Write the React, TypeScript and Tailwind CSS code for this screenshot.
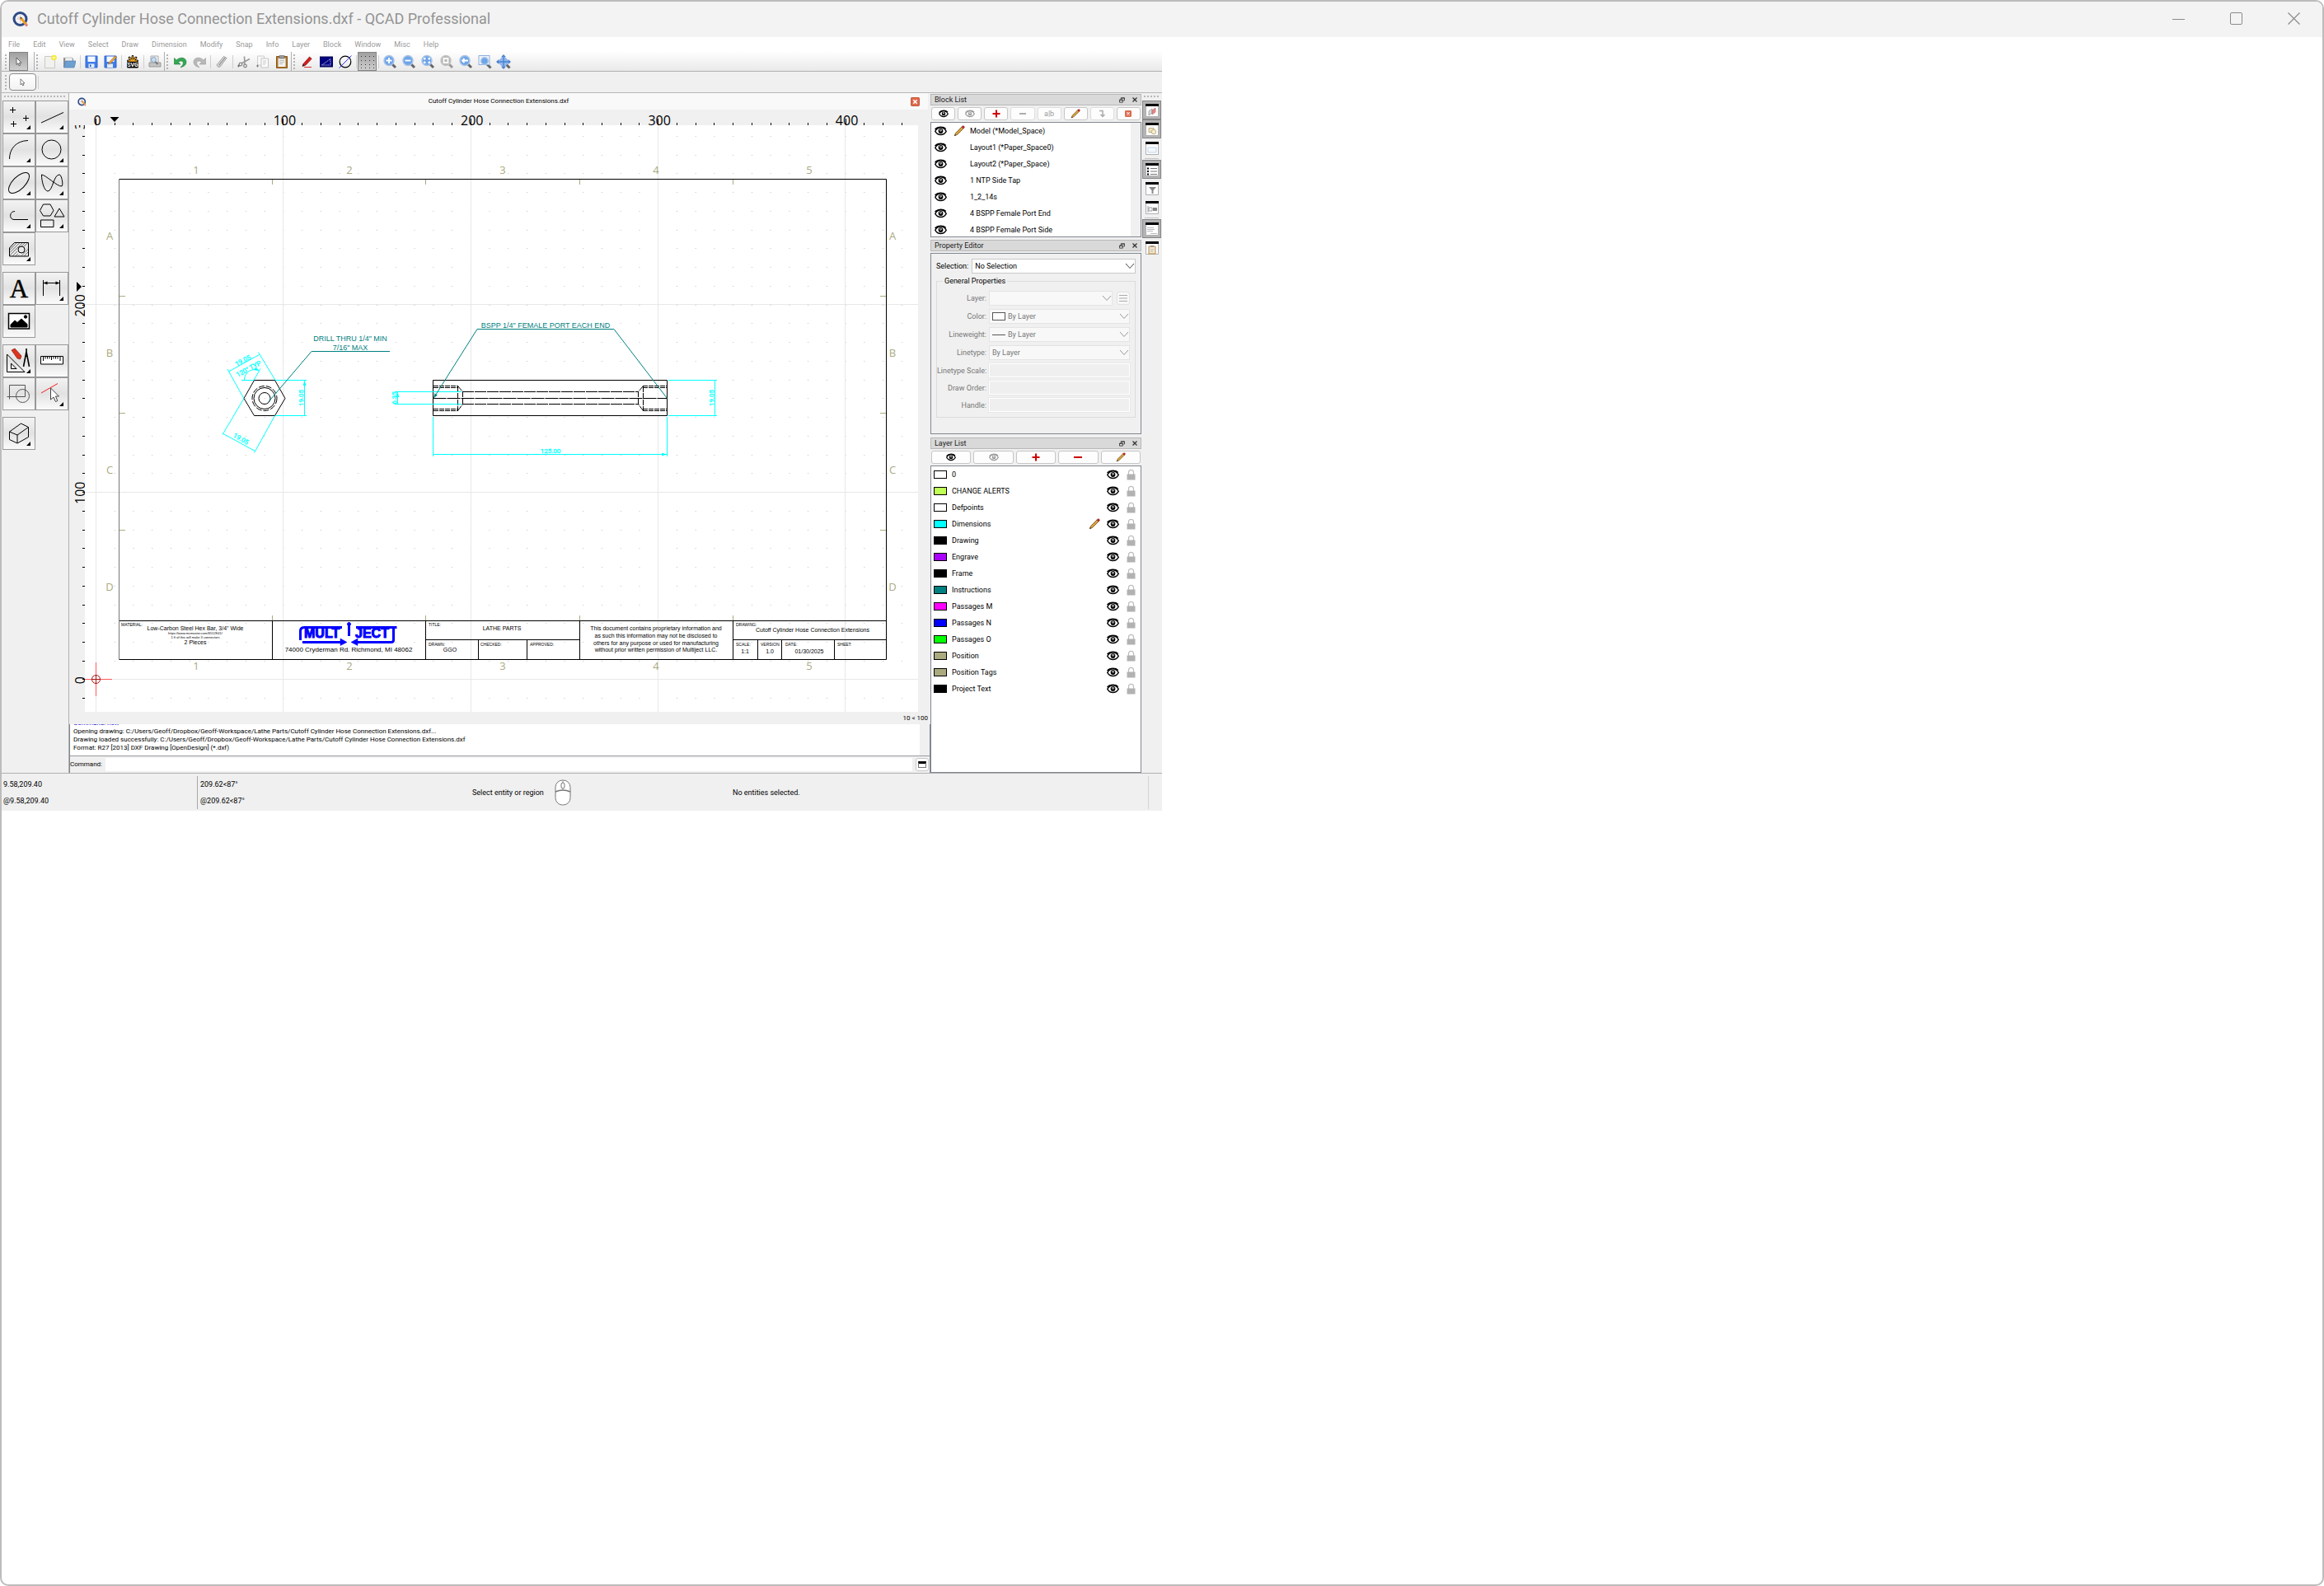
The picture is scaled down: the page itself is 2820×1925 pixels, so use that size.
import React from 'react';
import clsx from 'clsx';

type IconProps = { className?: string };

const menus = ['File', 'Edit', 'View', 'Select', 'Draw', 'Dimension', 'Modify', 'Snap', 'Info', 'Layer', 'Block', 'Window', 'Misc', 'Help'];

const blocks = [
  'Model (*Model_Space)',
  'Layout1 (*Paper_Space0)',
  'Layout2 (*Paper_Space)',
  '1 NTP Side Tap',
  '1_2_14s',
  '4 BSPP Female Port End',
  '4 BSPP Female Port Side',
];

const layers = [
  { name: '0', color: 'bg-white' },
  { name: 'CHANGE ALERTS', color: 'bg-[#bfff55]' },
  { name: 'Defpoints', color: 'bg-white' },
  { name: 'Dimensions', color: 'bg-[#00ffff]', active: true },
  { name: 'Drawing', color: 'bg-black' },
  { name: 'Engrave', color: 'bg-[#aa00ff]' },
  { name: 'Frame', color: 'bg-black' },
  { name: 'Instructions', color: 'bg-[#008080]' },
  { name: 'Passages M', color: 'bg-[#ff00ff]' },
  { name: 'Passages N', color: 'bg-[#0000ff]' },
  { name: 'Passages O', color: 'bg-[#00ff00]' },
  { name: 'Position', color: 'bg-[#aaaa7f]' },
  { name: 'Position Tags', color: 'bg-[#aaaa7f]' },
  { name: 'Project Text', color: 'bg-black' },
];

/* ---------- icons ---------- */

const AppLogo: React.FC<IconProps> = ({ className }) => (
  <svg viewBox="0 0 20 20" className={className}>
    <circle cx="9.5" cy="10" r="7.5" fill="#f4f4f8" stroke="#2f4a86" strokeWidth="3" />
    <path d="M5 10h9M9.500 5.500v9M6 7l7 6" stroke="#c9b3b3" strokeWidth=".7" />
    <path d="M10 8.500l6.500 8" stroke="#f0a020" strokeWidth="3" />
    <path d="M9.200 7.500l1 2.600 1.600-1.400z" fill="#333" />
    <path d="M16 16l2 2.500" stroke="#e08080" strokeWidth="3" />
  </svg>
);

const Eye: React.FC<IconProps> = ({ className }) => (
  <svg viewBox="0 0 15 12" className={className} fill="none" stroke="currentColor">
    <path d="M.8 6.300C2.500 3.300 4.800 1.800 7.500 1.800s5 1.500 6.700 4.500C12.500 9.200 10.200 10.500 7.500 10.500S2.500 9.200.8 6.300z" fill="white" strokeWidth="1.400" />
    <path d="M.6 4.300C2.600 1.900 4.800 1.300 7.500 1.300s4.600.6 6.200 2.200" strokeWidth="1.600" />
    <circle cx="7.500" cy="6" r="2.900" fill="currentColor" stroke="none" />
    <path d="M6.800 3.800v2q.8 1 1.500 0V4.200" stroke="white" strokeWidth=".9" />
  </svg>
);

const Pencil: React.FC<IconProps> = ({ className }) => (
  <svg viewBox="0 0 16 16" className={className}>
    <path d="M1.500 14.500L3 10.800 11.500 2.200l2.300 2.300L5.200 13z" fill="#d9a441" stroke="#6d4a17" strokeWidth=".9" />
    <path d="M11.500 2.200l1-1q1.200-.8 2.200.2t.2 2.100l-1.100 1z" fill="#d42a2a" stroke="#7a1515" strokeWidth=".6" />
    <path d="M1.300 14.700l.8-2.100 1.300 1.300z" fill="#222" />
  </svg>
);

const Lock: React.FC<IconProps> = ({ className }) => (
  <svg viewBox="0 0 11 14" className={className}>
    <path d="M2.500 7V4.300a3 3 0 016 0V7" fill="none" stroke="#bdbdbd" strokeWidth="1.200" />
    <rect x=".5" y="6.500" width="10" height="7" fill="#b2b2b2" />
  </svg>
);

const Plus: React.FC<IconProps> = ({ className }) => (
  <svg viewBox="0 0 10 10" className={className}>
    <path d="M5 .5v9M.5 5h9" stroke="#cc0000" strokeWidth="2" />
  </svg>
);

const Minus: React.FC<IconProps> = ({ className }) => (
  <svg viewBox="0 0 10 10" className={className}>
    <path d="M0 5h10" stroke="currentColor" strokeWidth="2" />
  </svg>
);

const CloseBox: React.FC<IconProps> = ({ className }) => (
  <svg viewBox="0 0 10 10" className={className}>
    <rect x=".5" y=".5" width="9" height="9" rx="1" fill="#e0694c" stroke="#c8573c" />
    <path d="M3 3l4 4M7 3L3 7" stroke="white" strokeWidth="1.400" />
  </svg>
);

const Chevron: React.FC<IconProps> = ({ className }) => (
  <svg viewBox="0 0 12 8" className={className}>
    <path d="M1 1l5 5.500L11 1" fill="none" stroke="currentColor" />
  </svg>
);

const Pointer: React.FC<IconProps> = ({ className }) => (
  <svg viewBox="0 0 8 12" className={className}>
    <path d="M1 1v8.500l2-1.800 1.200 3 1.400-.6-1.200-2.900H7z" fill="white" stroke="#444" strokeWidth=".8" />
  </svg>
);

const Lens: React.FC<{ glyph: string; gray?: boolean }> = ({ glyph, gray }) => (
  <svg viewBox="0 0 18 18" className="size-[18px]">
    <path d="M11 11l5 5" stroke={gray ? '#999' : '#666'} strokeWidth="3" />
    <circle cx="8" cy="7.500" r="6" fill={gray ? '#b5b5b5' : '#6fa5e8'} stroke={gray ? '#c5c5c5' : '#a9c4e6'} strokeWidth="1.500" />
    <path d={glyph} stroke="white" strokeWidth="1.800" fill="none" />
  </svg>
);

const FloatIcon: React.FC = () => (
  <svg viewBox="0 0 8 8" className="size-[7px]" fill="none" stroke="#333">
    <path d="M2.500 3V1h5v3.500H6M2.500 1.300h5" strokeWidth="1" />
    <path d="M.5 3.500h4.500V7H.5zM.5 4h4.500" strokeWidth="1" />
  </svg>
);

/* ---------- main toolbar ---------- */

const Grip: React.FC = () => <span className="mr-[3px] ml-[2px] h-[18px] w-[2px] shrink-0 bg-[repeating-linear-gradient(#b4b4b4_0_2px,transparent_2px_4px)]" />;

const Sep: React.FC = () => <span className="mx-px h-4 w-[2px] shrink-0 border-r border-[#d0d0d0]" />;

const Divider: React.FC = () => <span className="h-6 w-px shrink-0 bg-[#b0b0b0]" />;

const ToolButton: React.FC<{ label: string; pressed?: boolean; children: React.ReactNode }> = ({ label, pressed, children }) => (
  <button
    aria-label={label}
    className={clsx(
      'flex h-[23px] w-[23px] shrink-0 items-center justify-center',
      pressed && 'border border-[#858585] bg-linear-to-b from-[#a0a0a0] to-[#cfcfcf]',
    )}
  >
    {children}
  </button>
);

const Svg16: React.FC<{ children: React.ReactNode }> = ({ children }) => (
  <svg viewBox="0 0 16 16" className="size-4" fill="none">{children}</svg>
);

const MainToolbar: React.FC = () => (
  <div className="flex h-[25px] items-center border-b border-[#b0b0b0] bg-linear-to-b from-white to-[#e9e9e9] pt-px pl-[2px]">
    <Grip />
    <ToolButton label="Reset" pressed><Pointer className="h-3 w-2" /></ToolButton>
    <span className="w-[7px]" />
    <Divider />
    <Grip />
    <ToolButton label="New">
      <Svg16>
        <path d="M1.500 1.500h12v14h-12z" fill="#f1f1ef" stroke="#c9c9c4" />
        <circle cx="12.500" cy="3" r="3.300" fill="#f5ea3a" />
        <circle cx="12.500" cy="3" r="1.300" fill="#fffdd0" />
      </Svg16>
    </ToolButton>
    <ToolButton label="Open">
      <Svg16>
        <path d="M1 3h5l1 1h6v10H1z" fill="#8f8f8a" />
        <path d="M3 3h9v5H3z" fill="#f0f0f0" stroke="#999" strokeWidth=".5" />
        <path d="M3.500 7H16l-2 8H1.500z" fill="#6d9fd1" stroke="#4b7fb5" strokeWidth=".7" />
      </Svg16>
    </ToolButton>
    <Sep />
    <ToolButton label="Save">
      <Svg16>
        <path d="M1 1h14v14H1z" fill="#3f7cea" stroke="#2f66cc" />
        <path d="M3.500 1.500h9v6.500h-9z" fill="#f5f8ff" />
        <path d="M4.500 10.500h7V15h-7z" fill="#e4ecfa" />
        <path d="M6 11.500h1.500V14H6z" fill="#1e52b8" />
      </Svg16>
    </ToolButton>
    <ToolButton label="Save as">
      <Svg16>
        <path d="M1 1h14v14H1z" fill="#3f7cea" stroke="#2f66cc" />
        <path d="M3.500 1.500h9v6.500h-9z" fill="#f5f8ff" />
        <path d="M4 10.500h7V15H4z" fill="#e4ecfa" />
        <path d="M5.500 11l1-2.500L13.500 1l1.800 1.600L8 10z" fill="#f0a53a" stroke="#9c6415" strokeWidth=".6" />
      </Svg16>
    </ToolButton>
    <Sep />
    <ToolButton label="SVG export">
      <svg viewBox="0 0 16 16" className="size-4">
        <path d="M8 1.500v6M4 3l4 5M12 3L8 8M2.500 7h11" stroke="black" strokeWidth="2.800" strokeLinecap="round" />
        <path d="M8 1.500v5M4.200 3.200L7.500 7M11.800 3.200L8.500 7M3 7h10" stroke="#f5a623" strokeWidth="1.300" strokeLinecap="round" />
        <rect x="1" y="8" width="14" height="7.500" rx="1.500" fill="black" />
        <text x="8" y="14" fontSize="7" fontWeight="700" fill="white" textAnchor="middle" fontFamily="Roboto, sans-serif">SVG</text>
      </svg>
    </ToolButton>
    <Sep />
    <ToolButton label="Print preview">
      <Svg16>
        <path d="M3 1h9v9H3z" fill="#f2f2f2" stroke="#aaa" />
        <path d="M1 9h14v5H1z" fill="#c4c4c4" stroke="#999" />
        <path d="M8.500 8l3 3" stroke="#777" strokeWidth="2" />
        <circle cx="6.500" cy="5.500" r="3" fill="#c8ddf2" stroke="#7f9cbb" />
      </Svg16>
    </ToolButton>
    <Divider />
    <Grip />
    <ToolButton label="Undo">
      <Svg16>
        <path d="M.5 3.500v7.500H8L5.500 8.700C7.500 6.300 11 6.500 11.300 9.300c.2 2-1 3.700-3.300 5.400 4-.7 7-3 7-6.500C15 2.800 7.500 1.300 3.200 6z" fill="#34a853" stroke="#1c7a38" strokeWidth=".6" />
      </Svg16>
    </ToolButton>
    <ToolButton label="Redo">
      <Svg16>
        <path d="M15.500 3.500v7.500H8l2.500-2.300C8.500 6.300 5 6.500 4.700 9.300c-.2 2 1 3.700 3.300 5.400-4-.7-7-3-7-6.500C1 2.800 8.500 1.300 12.800 6z" fill="#b8b8b8" stroke="#999" strokeWidth=".6" />
      </Svg16>
    </ToolButton>
    <Sep />
    <ToolButton label="Delete">
      <Svg16>
        <path d="M2 12L10.500 1.500l3.500 2L6 14q-2.500 1.500-4-2z" fill="#e4e4e4" stroke="#9a9a9a" />
        <path d="M4.500 12.500L12 3" stroke="#9a9a9a" strokeWidth="1.500" />
      </Svg16>
    </ToolButton>
    <Sep />
    <ToolButton label="Cut">
      <Svg16>
        <path d="M8.500 1.500L9 11M15 4.500L5 10" stroke="#999" strokeWidth="1.600" />
        <circle cx="4" cy="11" r="1.800" stroke="#888" strokeWidth="1.300" />
        <circle cx="9.500" cy="13" r="1.800" stroke="#888" strokeWidth="1.300" />
        <path d="M0 13h3M1.500 11.500v3" stroke="#555" strokeWidth=".8" />
      </Svg16>
    </ToolButton>
    <ToolButton label="Copy">
      <Svg16>
        <path d="M1.500 1h8v11h-8z" fill="#f7f7f7" stroke="#cfcfcf" />
        <path d="M6 4h8.500v11H6z" fill="#fafafa" stroke="#c4c4c4" />
        <path d="M8 7h4M8 9h4M8 11h3" stroke="#ccc" />
        <path d="M0 13h3M1.500 11.500v3" stroke="#666" strokeWidth=".8" />
      </Svg16>
    </ToolButton>
    <ToolButton label="Paste">
      <Svg16>
        <path d="M1.500 1.500h13v14h-13z" fill="#b0762c" stroke="#875719" />
        <path d="M3.500 3.500h9v10.500h-9z" fill="#f2f2f0" />
        <path d="M5 .5h6V4H5z" fill="#999" stroke="#666" strokeWidth=".6" />
        <path d="M5 6.500h6M5 8.500h6M5 10.500h4" stroke="#bbb" />
      </Svg16>
    </ToolButton>
    <Divider />
    <Grip />
    <ToolButton label="Pen">
      <Svg16>
        <path d="M3 10.500L10.500 2l2.700 2.300L6 12l-4 1.500z" fill="#d32020" stroke="#861010" strokeWidth=".7" />
        <path d="M2 13.500l.8-2.700 2 1.700z" fill="#222" />
        <path d="M4 14.500h9" stroke="#e03030" strokeWidth="1" />
      </Svg16>
    </ToolButton>
    <ToolButton label="Draft mode">
      <Svg16>
        <path d="M0 2h16v12H0z" fill="#000080" stroke="#000050" />
        <path d="M2.500 12L13 4.500V12z" stroke="white" strokeDasharray="1.500 1" strokeWidth=".8" />
      </Svg16>
    </ToolButton>
    <ToolButton label="Line weights">
      <Svg16>
        <circle cx="8" cy="8" r="6.800" stroke="black" strokeWidth="1.200" />
        <path d="M.5 15.500L15.500.5" stroke="#3030ff" />
      </Svg16>
    </ToolButton>
    <Sep />
    <ToolButton label="Grid" pressed>
      <Svg16>
        <path d="M0 1.500h16M0 6.500h16M0 11.500h16M0 15.500h16" stroke="#333" strokeDasharray="1 4" />
      </Svg16>
    </ToolButton>
    <Sep />
    <ToolButton label="Zoom in"><Lens glyph="M8 4v7M4.500 7.500h7" /></ToolButton>
    <ToolButton label="Zoom out"><Lens glyph="M4.500 7.500h7" /></ToolButton>
    <ToolButton label="Auto zoom"><Lens glyph="M5 6.500V5h1.500M9.500 5H11v1.500M11 8.500V10H9.500M6.500 10H5V8.500" /></ToolButton>
    <ToolButton label="Zoom to selection"><Lens gray glyph="M5.500 5h5v5h-5z" /></ToolButton>
    <ToolButton label="Previous view"><Lens glyph="M12 7.500H5.500M7.500 5L5 7.500 7.500 10" /></ToolButton>
    <ToolButton label="Window zoom">
      <svg viewBox="0 0 18 18" className="size-[18px]">
        <path d="M12 12l4.500 4.500" stroke="#666" strokeWidth="3" />
        <rect x="2" y="1.500" width="13" height="11" fill="#eef3fb" stroke="#8fb0dc" />
        <circle cx="9" cy="8" r="4.300" fill="#6fa5e8" stroke="#a9c4e6" strokeWidth="1.500" />
      </svg>
    </ToolButton>
    <ToolButton label="Pan">
      <svg viewBox="0 0 18 18" className="size-[18px]">
        <path d="M12 12l4.500 4.500" stroke="#666" strokeWidth="3" />
        <circle cx="9" cy="9" r="5.500" fill="#8fb8ee" />
        <path d="M9 1v16M1 9h16M6.800 3.500L9 1l2.200 2.500M6.800 14.500L9 17l2.200-2.500M3.500 6.800L1 9l2.500 2.200M14.500 6.800L17 9l-2.500 2.200" fill="none" stroke="#4a82cf" strokeWidth="1.300" />
      </svg>
    </ToolButton>
  </div>
);

/* ---------- left tool dock ---------- */

const DrawTool: React.FC<{ label: string; menu?: boolean; children: React.ReactNode }> = ({ label, menu, children }) => (
  <button aria-label={label} className="size-10 border border-[#989898] bg-linear-to-b from-[#f3f3f3] via-[#e2e2e2] to-[#fbfbfb]">
    <svg viewBox="0 0 38 38" className="size-full" fill="none" stroke="black">
      {children}
      {menu && <path d="M33 29v5h-5z" fill="black" stroke="none" />}
    </svg>
  </button>
);

const ToolDock: React.FC = () => (
  <aside className="w-[82px] shrink-0 border-r border-[#b0b0b0] pl-px">
    <span className="mx-[2px] mt-[3px] mb-[4px] block h-[2px] bg-[repeating-linear-gradient(90deg,#b8b8b8_0_2px,transparent_2px_4px)]" />
    <div className="grid grid-cols-2">
      <DrawTool label="Point" menu><path d="M8 10.500h7M11.500 7v7M24 20.500h7M27.500 17v7M9 27.500h7M12.500 24v7" /></DrawTool>
      <DrawTool label="Line" menu><path d="M6 26L33 13.500" /></DrawTool>
      <DrawTool label="Arc" menu><path d="M7.500 30C7.500 18 15 8 30 7.500" /></DrawTool>
      <DrawTool label="Circle" menu><circle cx="18.500" cy="18.500" r="11.500" /></DrawTool>
      <DrawTool label="Ellipse" menu><ellipse cx="19" cy="19" rx="16" ry="7.500" transform="rotate(-45 19 19)" /></DrawTool>
      <DrawTool label="Spline" menu><path d="M6.500 9c0 8 3 20 7.500 20 6 0 7-20 14-20 3 0 5 13 3 14C26 24 11 9 6.500 9z" /></DrawTool>
      <DrawTool label="Polyline" menu><path d="M30 23.500H13c-6 0-6-10 1-10" /></DrawTool>
      <DrawTool label="Shape" menu><path d="M8.500 5h8.500l4 7.500-4 6.500H8.500l-4-6.500zM28 10l6 10H22zM5.500 24H21v8.500H5.500z" /></DrawTool>
      <DrawTool label="Hatch" menu>
        <path d="M7.500 28V18l6-6.500h17V28z" />
        <path d="M8 20l8-8M8 23.500L19.500 12M8 27l15-15M11 28l6-6M22 16l4.500-4.500M14.500 28l3.500-3M25 16l5-4.500M18 28l1.500-1.500M21.500 28l9-9M25 28l5.500-5.500" strokeWidth=".5" />
        <circle cx="22" cy="20" r="4" fill="#e8e8e8" />
      </DrawTool>
    </div>
    <div className="mt-2 grid grid-cols-2">
      <DrawTool label="Text">
        <text x="19" y="30" fontSize="31" fontFamily="Liberation Serif, serif" textAnchor="middle" fill="black" strokeWidth=".5">A</text>
      </DrawTool>
      <DrawTool label="Dimension" menu>
        <path d="M8.500 28V9M28.500 28V9M9 12.500h19" />
        <path d="M8.500 12.500l5-2v4zM28.500 12.500l-5-2v4z" fill="black" stroke="none" />
      </DrawTool>
      <DrawTool label="Image">
        <path d="M6.500 9.500h25v18.500h-25z" fill="white" strokeWidth="1.500" />
        <path d="M9 26v-3l5-5 3 2.500 5-4.500 7 6.500V26z" fill="black" />
        <circle cx="27" cy="13.500" r="1.700" fill="black" />
      </DrawTool>
    </div>
    <div className="mt-2 grid grid-cols-2">
      <DrawTool label="Drafting" menu>
        <path d="M4.500 11v21.500H26zM9.500 22v6.500h6.500z" />
        <path d="M10 6l4-2 8 9-1.500 4-3.500-1z" fill="#e0331c" stroke="#7c1c10" strokeWidth=".7" />
        <path d="M28 8v-4M28 8l-3.500 18M28 8l3.500 18M28 8v6" strokeWidth="1.600" />
      </DrawTool>
      <DrawTool label="Measure">
        <path d="M5.500 13.500h27v9.500h-27z" fill="white" />
        <path d="M8.500 14v5M11 14v2.500M13.500 14v2.500M16 14v2.500M18.500 14v4M21 14v2.500M23.500 14v2.500M26 14v2.500M29 14v5" />
      </DrawTool>
      <DrawTool label="Modify">
        <g stroke="#555"><path d="M7.500 8.500h19v14h-19z" /><circle cx="23.500" cy="21.500" r="8" /><path d="M4.500 22.500h6M7.500 19.500v6" /></g>
      </DrawTool>
      <DrawTool label="Select" menu>
        <path d="M6 18L26 6.500" stroke="#f02020" />
        <path d="M17.500 12v14l3.500-3 2.500 5.500 2.300-1L23.500 22h4z" fill="white" stroke="#444" />
      </DrawTool>
    </div>
    <div className="mt-2 grid grid-cols-2">
      <DrawTool label="Solid" menu>
        <path d="M7.500 17l14-10 9 4.500v12L17 31l-9.500-4.500zM7.500 17l9.500 4 13.500-9.500M17 21v10" />
      </DrawTool>
    </div>
  </aside>
);

/* ---------- drawing canvas ---------- */

const range = (n: number) => Array.from({ length: n }, (_, i) => i);

const Drawing: React.FC = () => (
  <svg viewBox="84 133 1040 731" className="block h-[731px] w-[1040px] shrink-0" fontFamily="Liberation Sans, Arial, sans-serif">
    <defs>
      <clipPath id="paper"><rect x="103" y="152" width="1011" height="712" /></clipPath>
      <clipPath id="ruler-top"><rect x="84" y="133" width="1030" height="19" /></clipPath>
      <clipPath id="ruler-left"><rect x="84" y="152" width="19" height="712" /></clipPath>
      <marker id="arrow" viewBox="0 0 6 4" refX="6" refY="2" markerWidth="6" markerHeight="4" markerUnits="userSpaceOnUse" orient="auto-start-reverse">
        <path d="M0 0l6 2-6 2z" fill="context-stroke" />
      </marker>
    </defs>
    <rect x="84" y="133" width="1040" height="731" fill="#f0f0f0" />
    <rect x="103" y="152" width="1011" height="712" fill="white" />

    {/* grid */}
    <g clipPath="url(#paper)">
      {range(31).map((r) => (
        <path key={r} d={`M116 ${Math.round(165 + r * 22.74)}.500H1114`} stroke="#c0c0c0" strokeDasharray="1 21.740" />
      ))}
      {[116.5, 343.5, 571.5, 798.5, 1025.5].map((x) => <path key={x} d={`M${x} 152V864`} stroke="#e8e8e8" />)}
      {[369.5, 597.5, 824.5].map((y) => <path key={y} d={`M103 ${y}H1114`} stroke="#e8e8e8" />)}
    </g>

    {/* rulers */}
    <g clipPath="url(#ruler-top)">
      {range(44).map((i) => <path key={i} d={`M${Math.round(116 + i * 22.74)}.500 ${i % 10 ? 149 : 144}v9`} stroke="black" />)}
      {['0', '100', '200', '300', '400'].map((t, i) => (
        <text key={t} x={118 + i * 227.4} y="152" fontSize="16" textAnchor="middle" fontFamily="Open Sans, sans-serif">{t}</text>
      ))}
      <path d="M133.500 142h11l-5.500 6z" />
    </g>
    <g clipPath="url(#ruler-left)">
      {range(31).map((i) => <path key={i} d={`M100 ${Math.round(165 + i * 22.74)}.500h3`} stroke="black" />)}
      {['300', '200', '100', '0'].map((t, i) => (
        <text key={t} transform={`translate(103 ${143.5 + i * 227.4}) rotate(-90)`} fontSize="16" textAnchor="middle" fontFamily="Open Sans, sans-serif">{t}</text>
      ))}
      <path d="M93 342v12l6-6z" />
    </g>

    {/* frame */}
    <g stroke="black" fill="none">
      <path d="M145 217.500h930.500v583H145M145 753.500h930.500M516.500 776.500h187M889.500 776.500h186" />
      <path d="M144.500 217v584" stroke="#777" />
      <path d="M330.500 753v47M516.500 753v47M703.500 753v47M889.500 753v47M580.500 777v23M639.500 777v23M919.500 777v23M948.500 777v23M1012.500 777v23" />
    </g>
    <g stroke="#aaaa7f">
      {[330.5, 516.5, 703.5, 889.5].map((x) => <path key={x} d={`M${x} 218v6M${x} 747v6`} />)}
      {[359.5, 501.5, 643.5].map((y) => <path key={y} d={`M145 ${y}h7M1068 ${y}h7`} />)}
    </g>
    <g fill="#aaaa7f" fontSize="13" textAnchor="middle" fontFamily="Open Sans, sans-serif">
      {[238, 424, 610, 796, 982].map((x, i) => (
        <React.Fragment key={x}>
          <text x={x} y="211">{i + 1}</text>
          <text x={x} y="813">{i + 1}</text>
        </React.Fragment>
      ))}
      {['A', 'B', 'C', 'D'].map((t, i) => (
        <React.Fragment key={t}>
          <text x="133" y={291 + i * 142}>{t}</text>
          <text x="1083" y={291 + i * 142}>{t}</text>
        </React.Fragment>
      ))}
    </g>

    {/* title block */}
    <g fontSize="5">
      <text x="147" y="760">MATERIAL:</text>
      <text x="520" y="760">TITLE:</text>
      <text x="520" y="784">DRAWN:</text>
      <text x="583" y="784">CHECKED:</text>
      <text x="643" y="784">APPROVED:</text>
      <text x="893" y="760">DRAWING:</text>
      <text x="893" y="784">SCALE:</text>
      <text x="923" y="784">VERSION:</text>
      <text x="953" y="784">DATE:</text>
      <text x="1016" y="784">SHEET:</text>
    </g>
    <g fontSize="7" textAnchor="middle">
      <text x="237" y="765">Low-Carbon Steel Hex Bar, 3/4" Wide</text>
      <text x="237" y="770" fontSize="4">https://www.mcmaster.com/6512K41/</text>
      <text x="237" y="775" fontSize="4">1 ft of this will make 3 connectors</text>
      <text x="237" y="782">2 Pieces</text>
      <text x="423" y="791" fontSize="8">74000 Cryderman Rd. Richmond, MI 48062</text>
      <text x="609" y="765">LATHE PARTS</text>
      <text x="546" y="791">GGO</text>
      <text x="986" y="767">Cutoff Cylinder Hose Connection Extensions</text>
      <text x="904" y="793">1:1</text>
      <text x="934" y="793">1.0</text>
      <text x="982" y="793">01/30/2025</text>
    </g>
    <g fontSize="7" textAnchor="middle">
      <text x="796" y="765">This document contains proprietary information and</text>
      <text x="796" y="774">as such this information may not be disclosed to</text>
      <text x="796" y="783">others for any purpose or used for manufacturing</text>
      <text x="796" y="791">without prior written permission of Multiject LLC.</text>
    </g>
    <g fill="#0000ff" stroke="#0000ff">
      <g fontSize="16" fontWeight="700" strokeWidth="1">
        <text x="369" y="774">MULT</text>
        <text x="431" y="774">JECT</text>
      </g>
      <path d="M364.500 777v-11q0-4.500 5-4.500H415M432 761.500h49.500M477.500 762v15q0 2.500-3 2.500H434M367 779.500h46" fill="none" strokeWidth="3" />
      <path d="M423.500 757v15" strokeWidth="3" />
      <path d="M413 775l8 4.500-8 4zM434 775l-8 4.500 8 4z" strokeWidth=".5" />
      <circle cx="423.500" cy="757.500" r="2" />
    </g>

    {/* origin */}
    <path d="M103 824.500h33M116.500 804v41" stroke="#ff5a5a" />
    <circle cx="116.500" cy="824.500" r="5" fill="none" stroke="#aa1111" />
    <path d="M111 824.500h11M116.500 819v11" stroke="#aa1111" />

    {/* hex end view */}
    <g stroke="black" fill="none">
      <path d="M296 483.500l12.500-22h25l12.500 22-12.500 21h-25z" />
      <circle cx="321" cy="483.500" r="7" />
      <circle cx="321" cy="483.500" r="13" />
      <circle cx="321" cy="483.500" r="15" strokeDasharray="7 2" />
    </g>
    <g stroke="#00ffff" fill="none">
      <path d="M334 461.500h38M334 504.500h38M276 448l19.500 35M313.500 427.500l20.500 34M293 461.500h15l8-14M296 483.500l-26 44M333.500 504.500l-25 45" />
      <path d="M369.500 462v42M277.500 451l37-20.500M271 526.500l38.500 21M296.500 461a12.300 12.300 0 0118-11" markerStart="url(#arrow)" markerEnd="url(#arrow)" />
    </g>
    <g fill="#00ffff" stroke="#00ffff" strokeWidth=".3" fontSize="8" textAnchor="middle" fontFamily="Roboto, sans-serif">
      <text transform="translate(368 483) rotate(-90)">19.05</text>
      <text transform="translate(296 440) rotate(-28)">19.05</text>
      <text transform="translate(303 450) rotate(-28)">120° TYP</text>
      <text transform="translate(291 535) rotate(30)">19.05</text>
      <text transform="translate(481 483) rotate(-90)">6.35</text>
      <text transform="translate(866 483) rotate(-90)">19.05</text>
      <text x="668" y="550">125.00</text>
    </g>

    {/* side view */}
    <g stroke="black" fill="none">
      <path d="M525.500 461.500h284v43h-284z" />
      <path d="M525.500 483.500h284" strokeDasharray="16 1" />
      <path d="M561 475.500h214M561 490.500h214" strokeDasharray="14 1" />
      <path d="M526 468.500h30M526 470.500h30M526 496.500h30M526 498.500h30M780 468.500h29M780 470.500h29M780 496.500h29M780 498.500h29" strokeDasharray="6 1" />
      <path d="M555.500 469v30M561.500 475v16M555.500 468.500l6 7M555.500 498.500l6-8M780.500 469v30M774.500 475v16M780.500 468.500l-6 7M780.500 498.500l-6-8" strokeDasharray="7 1" />
    </g>
    <g stroke="#00ffff" fill="none">
      <path d="M479 475.500h81M479 490.500h81M525.500 506v48M809.500 506v48M811 461.500h59M811 504.500h59" />
      <path d="M482.500 476v14M867.500 462v42M526 551.500h283" markerStart="url(#arrow)" markerEnd="url(#arrow)" />
    </g>

    {/* notes */}
    <g stroke="#008080" fill="none">
      <path d="M473 426.500h-95l-52 61M745 399.500l64.500 84M745 399.500H579l-53 84" markerEnd="url(#arrow)" />
    </g>
    <g fill="#008080" fontSize="9" textAnchor="middle">
      <text x="425" y="414">DRILL THRU 1/4" MIN</text>
      <text x="425" y="425">7/16" MAX</text>
      <text x="662" y="398">BSPP 1/4" FEMALE PORT EACH END</text>
    </g>
  </svg>
);

const CommandLine: React.FC = () => (
  <section className="flex flex-col border-x border-[#828790] text-[8px]">
    <div className="flex h-[39px] justify-between border-b border-[#9a9aa0] bg-white">
      <div className="flex flex-col justify-end overflow-hidden pb-1 pl-1 leading-[10px]">
        <p className="text-[#0000d0]">Command: new</p>
        <p>Opening drawing: C:/Users/Geoff/Dropbox/Geoff-Workspace/Lathe Parts/Cutoff Cylinder Hose Connection Extensions.dxf...</p>
        <p>Drawing loaded successfully: C:/Users/Geoff/Dropbox/Geoff-Workspace/Lathe Parts/Cutoff Cylinder Hose Connection Extensions.dxf</p>
        <p>Format: R27 [2013] DXF Drawing [OpenDesign] (*.dxf)</p>
      </div>
      <span className="w-3 bg-[#f0f0f0]" />
    </div>
    <div className="flex h-5 items-center gap-1">
      <label htmlFor="command">Command:</label>
      <input id="command" className="h-4 flex-1 bg-white" />
      <button aria-label="Command options" className="mr-px flex h-4 w-4 items-center justify-center rounded-[3px] border border-[#c8c8c8] bg-white">
        <span className="h-2 w-[10px] border border-t-3 border-[#777] border-t-black" />
      </button>
    </div>
  </section>
);

/* ---------- right docks ---------- */

const DockTitle: React.FC<{ title: string }> = ({ title }) => (
  <header className="flex h-[14px] items-center border border-[#b8b8b8] bg-[#d9d9d9] pr-1 pl-1 text-[#222]">
    <h2 className="flex-1">{title}</h2>
    <button aria-label={`Float ${title}`} className="mr-[9px]"><FloatIcon /></button>
    <button aria-label={`Close ${title}`}>
      <svg viewBox="0 0 6 6" className="size-[6px]"><path d="M.5.5l5 5M5.500.5l-5 5" stroke="#333" strokeWidth="1.300" /></svg>
    </button>
  </header>
);

const DockButton: React.FC<{ label: string; disabled?: boolean; children: React.ReactNode }> = ({ label, disabled, children }) => (
  <button
    aria-label={label}
    disabled={disabled}
    className={clsx(
      'flex h-4 flex-1 items-center justify-center rounded-[3px] border bg-[#fdfdfd]',
      disabled ? 'border-[#dedede] text-[#999]' : 'border-[#c6c6c6] text-black',
    )}
  >
    {children}
  </button>
);

const BlockList: React.FC = () => (
  <section className="pt-px">
    <DockTitle title="Block List" />
    <div className="flex gap-[3px] px-px py-[2px]">
      <DockButton label="Show all blocks"><Eye className="h-[10px] w-3" /></DockButton>
      <DockButton label="Hide all blocks"><Eye className="h-[10px] w-3 text-[#999]" /></DockButton>
      <DockButton label="Add block"><Plus className="size-[10px]" /></DockButton>
      <DockButton label="Remove block" disabled><Minus className="size-2" /></DockButton>
      <DockButton label="Rename block" disabled>a|b</DockButton>
      <DockButton label="Edit block"><Pencil className="size-3" /></DockButton>
      <DockButton label="Insert block" disabled>
        <svg viewBox="0 0 8 10" className="h-[10px] w-2" fill="none" stroke="#aaa"><path d="M1 1.500h4v6M2.500 6L5 8.500 7.500 6" strokeWidth="1.500" /></svg>
      </DockButton>
      <DockButton label="Close block"><CloseBox className="size-2" /></DockButton>
    </div>
    <div className="flex h-[140px] overflow-hidden border border-[#828790] bg-white">
      <ul className="flex-1">
        {blocks.map((name, i) => (
          <li key={name} className="flex h-5 items-center pl-1">
            <Eye className="mr-2 h-3 w-[15px]" />
            <span className="w-5">{i === 0 && <Pencil className="size-[14px]" />}</span>
            {name}
          </li>
        ))}
      </ul>
      <span className="w-3 bg-[#f0f0f0]" />
    </div>
  </section>
);

const PropertySelect: React.FC<{ id: string; label: string; value: string; mark?: React.ReactNode; extra?: React.ReactNode }> = ({ id, label, value, mark, extra }) => (
  <>
    <label htmlFor={id} className="text-right text-[#777]">{label}</label>
    <div className="flex gap-[5px]">
      <div className="relative flex-1">
        <select
          id={id}
          disabled
          className={clsx('block h-[18px] w-full appearance-none border border-[#e4e4e4] bg-[#f8f8f8] text-[#777] opacity-100', mark ? 'pl-[22px]' : 'pl-[3px]')}
        >
          <option>{value}</option>
        </select>
        {mark}
        <Chevron className="pointer-events-none absolute top-[5px] right-[1px] h-2 w-3 text-[#999]" />
      </div>
      {extra}
    </div>
  </>
);

const PropertyInput: React.FC<{ id: string; label: string }> = ({ id, label }) => (
  <>
    <label htmlFor={id} className="text-right whitespace-nowrap text-[#777]">{label}</label>
    <input id={id} disabled className="h-[17px] min-w-0 border border-white bg-[#efefef] outline outline-[#e8e8e8]" />
  </>
);

const PropertyEditor: React.FC = () => (
  <section className="mt-[3px]">
    <DockTitle title="Property Editor" />
    <div className="mt-[2px] h-[220px] border border-[#828790] px-[6px] pt-[6px]">
      <div className="flex items-center gap-1">
        <label htmlFor="selection">Selection:</label>
        <div className="relative flex-1">
          <select id="selection" className="block h-[18px] w-full appearance-none border border-[#c8c8c8] bg-white pl-[3px]">
            <option>No Selection</option>
          </select>
          <Chevron className="pointer-events-none absolute top-[5px] right-[1px] h-2 w-3 text-[#444]" />
        </div>
      </div>
      <fieldset className="mt-[3px] border border-[#dcdcdc] px-[6px] pt-[6px] pb-[6px] pl-0">
        <legend className="ml-[7px] px-[2px] leading-3">General Properties</legend>
        <div className="grid grid-cols-[60px_1fr] items-center gap-x-[3px] gap-y-1">
          <PropertySelect
            id="layer"
            label="Layer:"
            value=""
            extra={
              <button aria-label="Layer menu" disabled className="flex h-[16px] w-[16px] items-center justify-center self-center rounded-[3px] border border-[#e2e2e2] bg-[#f8f8f8]">
                <svg viewBox="0 0 10 10" className="size-[10px]"><path d="M0 1.500h10M0 5h10M0 8.500h10" stroke="#aaa" /></svg>
              </button>
            }
          />
          <PropertySelect id="color" label="Color:" value="By Layer" mark={<span className="pointer-events-none absolute top-[4px] left-1 h-[10px] w-4 border border-[#555] bg-white" />} />
          <PropertySelect id="lineweight" label="Lineweight:" value="By Layer" mark={<span className="pointer-events-none absolute top-[9px] left-1 h-px w-4 bg-[#555]" />} />
          <PropertySelect id="linetype" label="Linetype:" value="By Layer" />
          <PropertyInput id="linetype-scale" label="Linetype Scale:" />
          <PropertyInput id="draw-order" label="Draw Order:" />
          <PropertyInput id="handle" label="Handle:" />
        </div>
      </fieldset>
    </div>
  </section>
);

const LayerList: React.FC = () => (
  <section className="mt-1 flex flex-1 flex-col">
    <DockTitle title="Layer List" />
    <div className="flex gap-[3px] px-px py-[2px]">
      <DockButton label="Show all layers"><Eye className="h-[10px] w-3" /></DockButton>
      <DockButton label="Hide all layers"><Eye className="h-[10px] w-3 text-[#999]" /></DockButton>
      <DockButton label="Add layer"><Plus className="size-[10px]" /></DockButton>
      <DockButton label="Remove layer"><Minus className="size-[10px] text-[#cc0000]" /></DockButton>
      <DockButton label="Edit layer"><Pencil className="size-3" /></DockButton>
    </div>
    <ul className="flex-1 border border-[#828790] bg-white">
      {layers.map((layer) => (
        <li key={layer.name} className="flex h-5 items-center pr-[6px] pl-[3px]">
          <span className={clsx('mr-[6px] h-[10px] w-4 border border-black', layer.color)} />
          <span className="flex-1">{layer.name}</span>
          {layer.active && <Pencil className="mr-2 size-[14px]" />}
          <Eye className="mr-[9px] h-3 w-[15px]" />
          <Lock className="h-[14px] w-[11px]" />
        </li>
      ))}
    </ul>
  </section>
);

const PanelButton: React.FC<{ label: string; pressed?: boolean; children: React.ReactNode }> = ({ label, pressed, children }) => (
  <button
    aria-label={label}
    className={clsx('flex h-[23px] w-[23px] items-center justify-center', pressed && 'border border-[#858585] bg-[#b4b4b4]')}
  >
    <svg viewBox="0 0 16 16" className="size-4" fill="none">
      <path d="M.5.5h15v15H.5z" fill="white" stroke="#b0b0b0" />
      <path d="M0 0h16v3H0z" fill="black" />
      {children}
    </svg>
  </button>
);

const PanelBar: React.FC = () => (
  <aside className="flex w-[25px] shrink-0 flex-col items-center">
    <span className="mt-[3px] mb-1 h-[2px] w-5 shrink-0 bg-[repeating-linear-gradient(90deg,#b8b8b8_0_2px,transparent_2px_4px)]" />
    <PanelButton label="Layers panel" pressed><path d="M4 14V9l4-3v5z" fill="#ddd" stroke="#888" strokeWidth=".7" /><path d="M8 13V8l4-3v5z" fill="#e88" stroke="#a66" strokeWidth=".7" /></PanelButton>
    <PanelButton label="Blocks panel" pressed><path d="M4 6.500h6v5H4z" fill="#f1e6c4" stroke="#a89662" strokeWidth=".7" /><circle cx="10" cy="11" r="2.800" fill="#f7eed2" stroke="#a89662" strokeWidth=".7" /></PanelButton>
    <PanelButton label="Views panel"><path d="M3 7h10v6H3z" fill="#f4f8ff" stroke="#c3d3ea" /></PanelButton>
    <span className="my-px h-px w-[17px] bg-[#c4c4c4]" />
    <PanelButton label="Properties panel" pressed><path d="M2 5.500h2v2H2zM2 9h2v2H2zM2 12.500h2v2H2z" fill="black" /><path d="M6 6.500h8M6 10h8M6 13.500h8" stroke="#777" /></PanelButton>
    <PanelButton label="Filter panel"><path d="M4 6h9l-3.500 4v4h-2v-4z" fill="#888" /></PanelButton>
    <PanelButton label="Library panel"><path d="M3 6v8M4 8h4v4H4z" stroke="#999" /><path d="M9 8h5v4H9z" fill="#888" /></PanelButton>
    <span className="my-px h-px w-[17px] bg-[#c4c4c4]" />
    <PanelButton label="Command panel" pressed><path d="M2 6.500h8M2 8.500h9M2 10.500h7M6 13.500h8" stroke="#bbb" /></PanelButton>
    <PanelButton label="Clipboard panel"><path d="M4 6h8v9H4z" fill="#f3e6cf" stroke="#b98d4c" /><path d="M6 5h4v2H6z" fill="#999" /><path d="M6 10h4M6 12h3" stroke="#bbb" /></PanelButton>
  </aside>
);

const StatusBar: React.FC = () => (
  <footer className="flex h-[46px] items-center border-t border-[#b0b0b0] bg-[#f0f0f0] pt-px">
    <div className="flex h-10 w-[237px] flex-col justify-between py-1 pl-[2px] leading-3">
      <span>9.58,209.40</span>
      <span>@9.58,209.40</span>
    </div>
    <div className="flex h-10 w-[334px] flex-col justify-between border-l border-[#a8a8a8] py-1 pl-[3px] leading-3">
      <span>209.62&lt;87°</span>
      <span>@209.62&lt;87°</span>
    </div>
    <div className="flex w-[316px] items-center gap-3">
      <span className="w-[88px] whitespace-nowrap">Select entity or region</span>
      <svg viewBox="0 0 20 32" className="h-8 w-5" fill="white" stroke="#777">
        <rect x="1" y="1" width="18" height="30" rx="8.500" />
        <path d="M1 15q9-4 18 0" fill="none" strokeWidth="1.500" />
        <path d="M10 1v12" stroke="#999" />
        <rect x="8" y="4" width="4" height="7" rx="2" />
      </svg>
    </div>
    <span className="flex-1">No entities selected.</span>
    <span className="mr-4 h-10 w-px bg-[#d4d4d4]" />
  </footer>
);

const App: React.FC = () => (
  <div className="flex min-h-screen flex-col rounded-[10px] border-2 border-[#bcbcbc] bg-white font-[Roboto,sans-serif] text-[9px] leading-3 text-black">
    <header className="flex h-[43px] items-center rounded-t-lg bg-[#f3f3f3] pr-[26px] pb-px pl-[13px] text-[#949494]">
      <AppLogo className="mr-[10px] size-5" />
      <h1 className="flex-1 text-[18px] leading-6">Cutoff Cylinder Hose Connection Extensions.dxf - QCAD Professional</h1>
      <div className="flex items-center gap-[54px]">
        <button aria-label="Minimize"><svg viewBox="0 0 16 16" className="size-4"><path d="M0 8.500h15" stroke="#8a8a8a" /></svg></button>
        <button aria-label="Maximize"><svg viewBox="0 0 16 16" className="size-4"><rect x=".5" y=".5" width="14" height="14" rx="1.500" fill="none" stroke="#8a8a8a" /></svg></button>
        <button aria-label="Close"><svg viewBox="0 0 16 16" className="size-4"><path d="M.5.5l14 14M14.500.5l-14 14" stroke="#8a8a8a" strokeWidth="1.200" /></svg></button>
      </div>
    </header>

    <main className="flex w-1/2 flex-col bg-[#f0f0f0]">
      <nav className="flex h-[17px] items-center gap-4 bg-white pl-2 text-[#9a9a9a]">
        {menus.map((m) => <button key={m}>{m}</button>)}
      </nav>
      <MainToolbar />
      <div className="flex h-[26px] items-center border-b border-[#b8b8b8] pl-[2px]">
        <Grip />
        <button aria-label="Selection tool" className="flex h-[21px] w-[33px] items-center justify-center rounded-[4px] border border-[#8a8a8a] bg-linear-to-b from-white to-[#f2f2f2]">
          <Pointer className="h-[10px] w-[7px]" />
        </button>
        <span className="ml-[2px] h-4 w-px bg-[#d0d0d0]" />
      </div>

      <div className="flex">
        <ToolDock />
        <div className="flex min-w-0 flex-1 flex-col">
          <div className="mr-[3px] flex h-5 items-center bg-[#f9f9f9] pr-[10px] pl-[10px]">
            <AppLogo className="size-[11px]" />
            <span className="flex-1 text-center text-[8px]">Cutoff Cylinder Hose Connection Extensions.dxf</span>
            <button aria-label="Close drawing"><CloseBox className="size-[11px]" /></button>
          </div>
          <Drawing />
          <div className="flex h-[15px] items-center justify-end pr-[3px] text-[8px]">10 &lt; 100</div>
          <CommandLine />
        </div>
        <div className="flex w-[256px] shrink-0 flex-col">
          <BlockList />
          <PropertyEditor />
          <LayerList />
        </div>
        <PanelBar />
      </div>
      <StatusBar />
    </main>
  </div>
);

export default App;
